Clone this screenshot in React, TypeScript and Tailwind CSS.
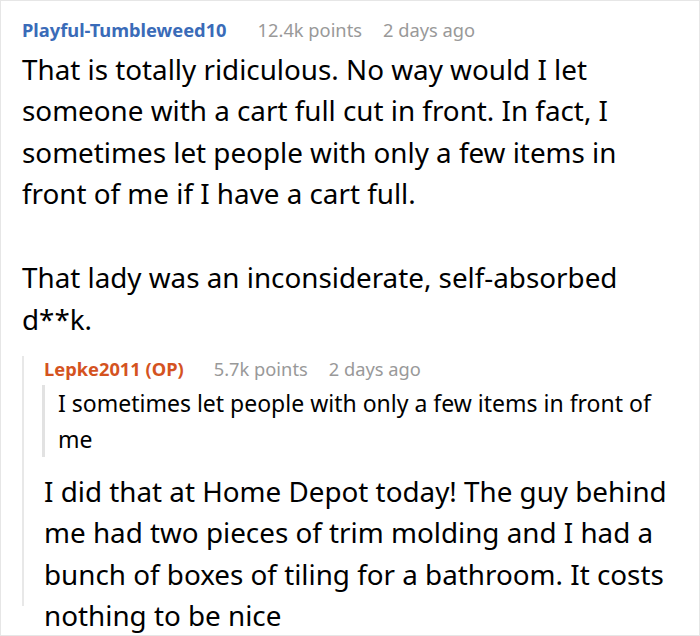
import React from "react";

const font = { fontFamily: '"Noto Sans", "Open Sans", sans-serif' };

export default function App() {
  return (
    <div
      className="w-[700px] h-[636px] overflow-hidden border border-[#e6e6e6] bg-white text-black"
      style={font}
    >
      <div className="pl-[21px] pt-[16px]">
        <div className="flex items-baseline h-[26px] text-[18.3px] leading-[26px]">
          <span className="font-bold text-[#3a6bb8]">Playful-Tumbleweed10</span>
          <span className="ml-[31px] text-[#999999]">12.4k points</span>
          <span className="ml-[21px] text-[#999999]">2 days ago</span>
        </div>
        <div className="mt-[6px] text-[27.8px] leading-[41.3px] pr-[4px]">
          <p>
            That is totally ridiculous. No way would I let
            <br />
            someone with a cart full cut in front. In fact, I
            <br />
            sometimes let people with only a few items in
            <br />
            front of me if I have a cart full.
          </p>
          <p className="mt-[43.3px]">
            That lady was an inconsiderate, self-absorbed
            <br />
            d**k.
          </p>
        </div>
        <div className="mt-[30px] h-[250px] border-l-2 border-[#e8e8e8] pl-[20px]">
          <div className="-mt-[14px] flex items-baseline h-[26px] text-[18.3px] leading-[26px]">
            <span className="font-bold text-[#d4531f]">Lepke2011 (OP)</span>
            <span className="ml-[30px] text-[#999999]">5.7k points</span>
            <span className="ml-[21px] text-[#999999]">2 days ago</span>
          </div>
          <div className="mt-[3px] -ml-[2px] border-l-[3px] border-[#e2e2e2] pl-[13px] text-[23px] leading-[36px]">
            I sometimes let people with only a few items in front of
            <br />
            me
          </div>
          <div className="mt-[14px] text-[27.8px] leading-[41.3px] whitespace-nowrap">
            I did that at Home Depot today! The guy behind
            <br />
            me had two pieces of trim molding and I had a
            <br />
            bunch of boxes of tiling for a bathroom. It costs
            <br />
            nothing to be nice
          </div>
        </div>
      </div>
    </div>
  );
}
